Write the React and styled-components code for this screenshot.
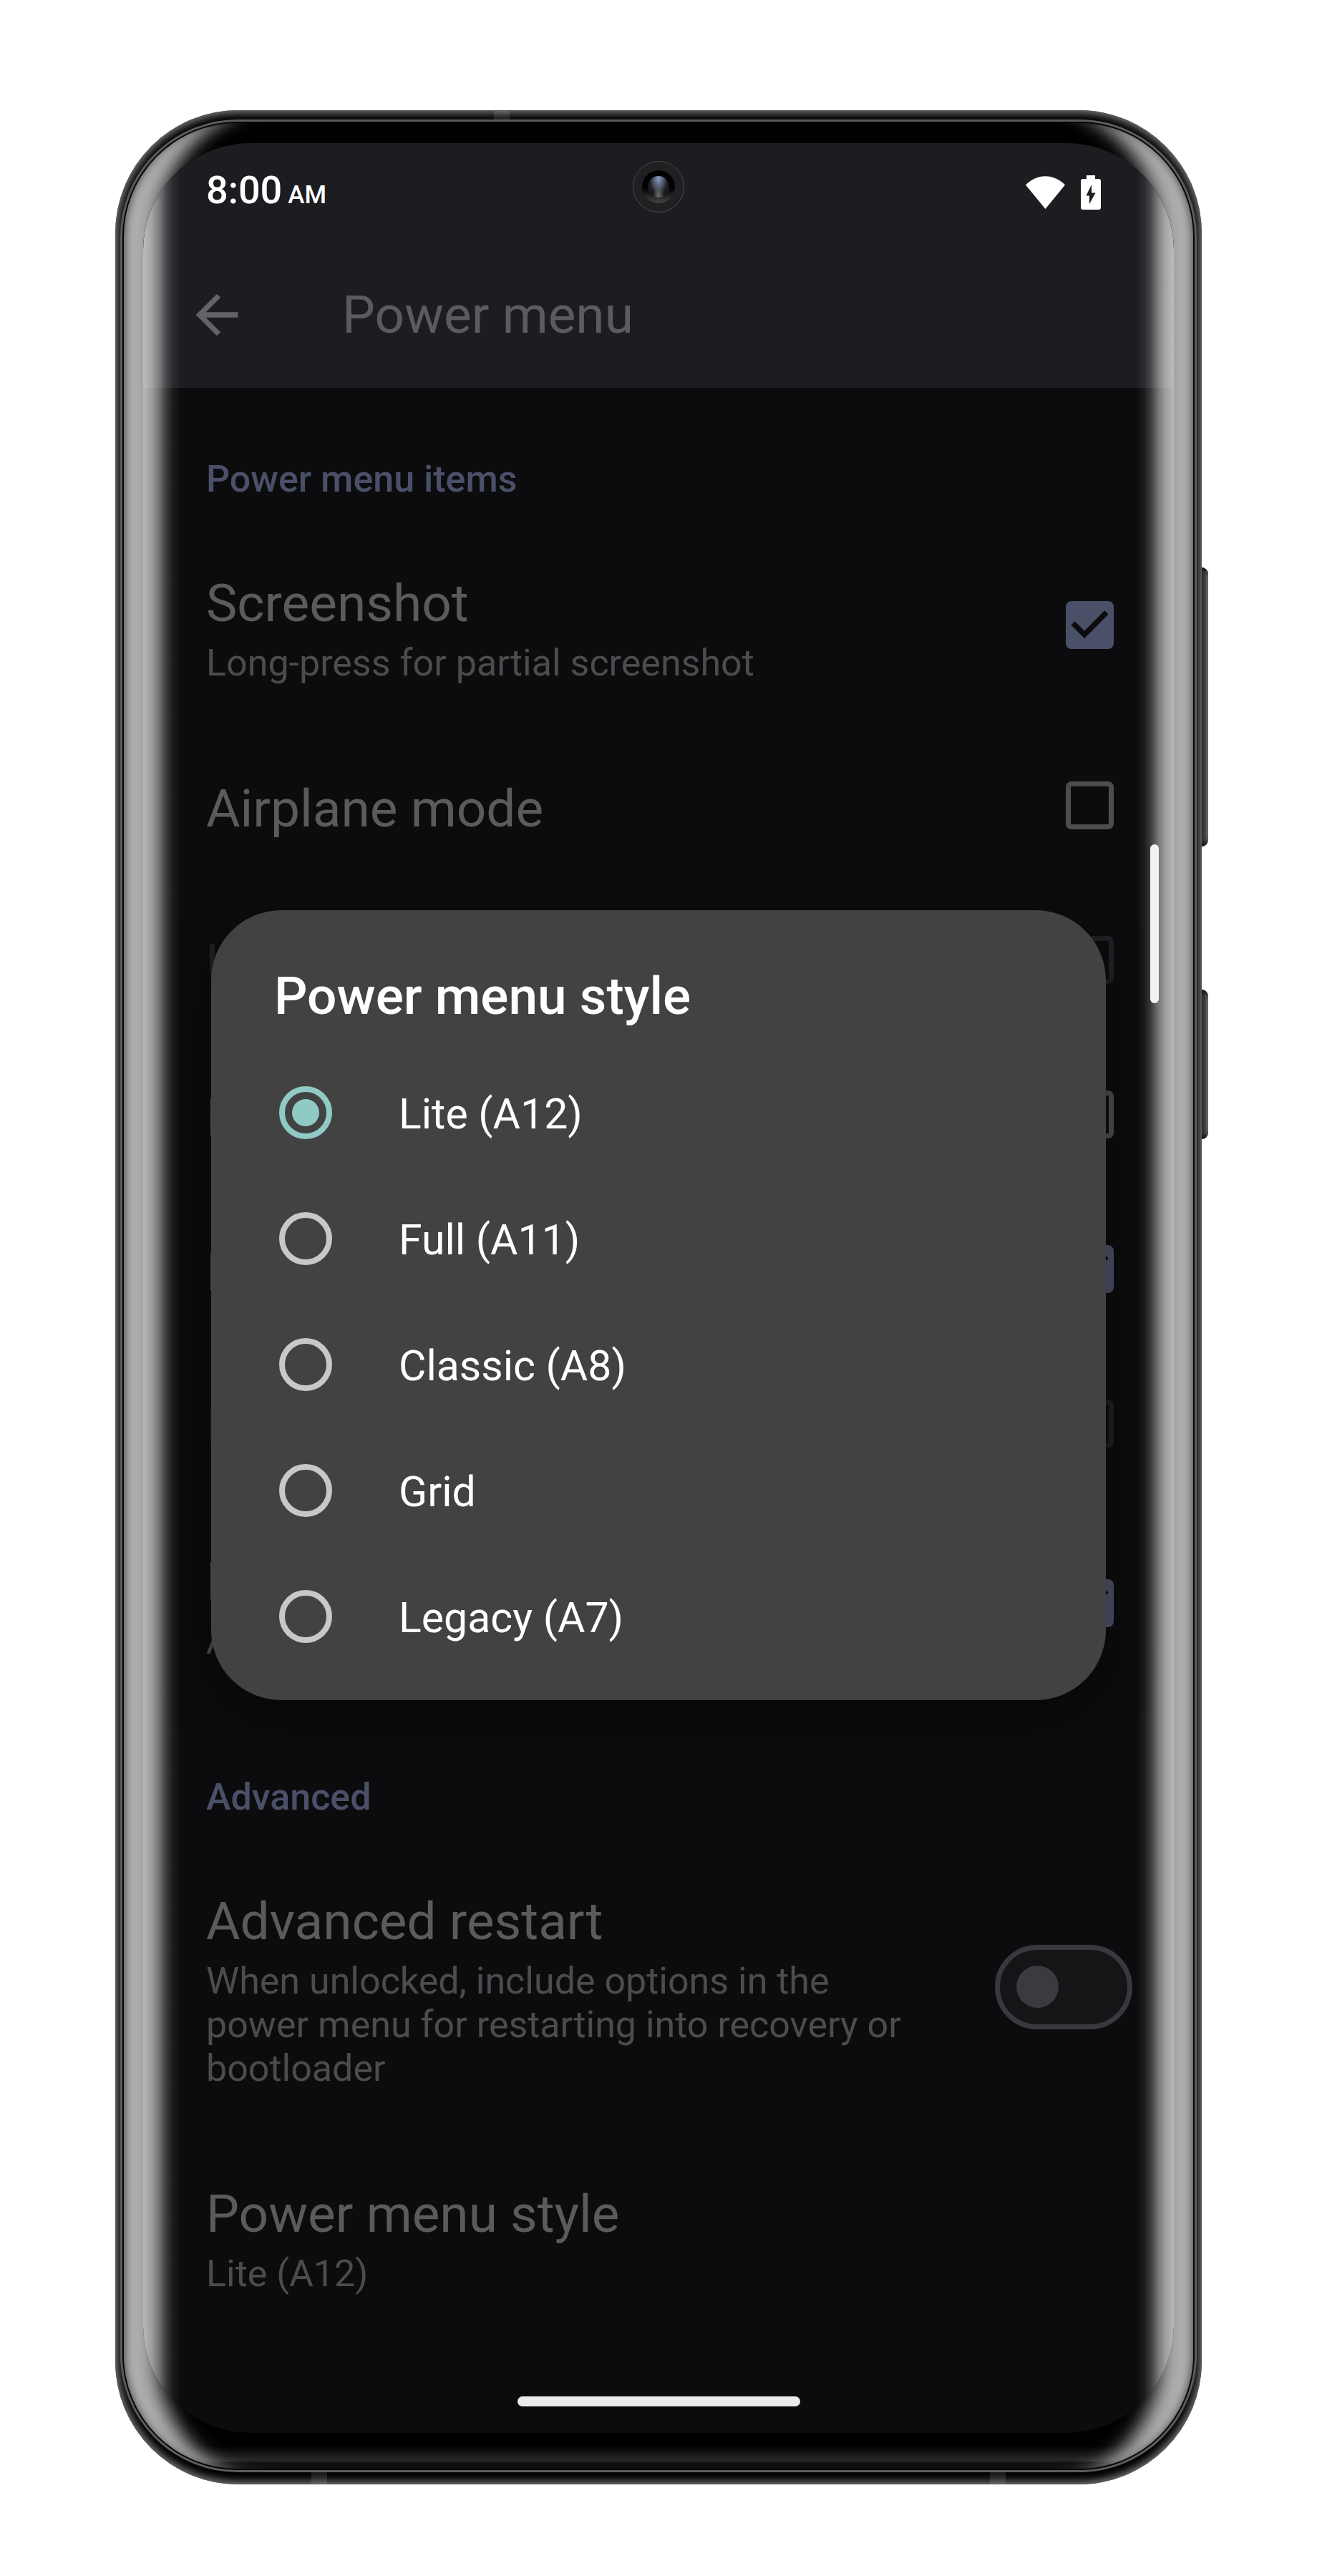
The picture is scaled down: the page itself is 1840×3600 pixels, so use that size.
import React, { useState } from "react";
import styled, { createGlobalStyle, css } from "styled-components";

const GlobalStyle = createGlobalStyle`
  *, *::before, *::after { box-sizing: border-box; }
  body {
    margin: 0;
    background: #ffffff;
    font-family: Roboto, "Noto Sans", sans-serif;
  }
`;

const color = {
  screen: "#0c0c0e",
  bar: "#1c1d20",
  title: "#5b5b5d",
  summary: "#4c4c4f",
  accent: "#4a5068",
  outline: "#4d4d50",
  disabled: "#202124",
  dialog: "#424242",
  radio: "#c8c8c8",
  teal: "#90cac5",
};

const Page = styled.main`
  padding: 154px 24px 128px;
`;

/* ---------- device body ---------- */

const Phone = styled.div`
  position: relative;
  max-width: 1518px;
  margin: 0 auto;
  padding: 13px 7px 17px;
  border-radius: 172px;
  background: #000;
  box-shadow: inset 0 0 12px 4px #7c7c7c;
`;

const Rim = styled.div`
  border: 3px solid #5c5c5c;
  border-radius: 164px;
  background: #050505;
  padding: 2px;
`;

const Glass = styled.div`
  padding: 28px 27px 50px;
  border-radius: 159px;
  background: linear-gradient(
    to top,
    #121212 0 10px,
    #2c2c2c 10px,
    #000 32px
  );
  box-shadow:
    inset 8px 0 12px -6px rgba(0, 0, 0, 0.55),
    inset -8px 0 12px -6px rgba(0, 0, 0, 0.55),
    inset 76px 0 26px -30px #aeaeae,
    inset -76px 0 26px -30px #aeaeae;
`;

const glow = css`
  rgba(255, 255, 255, 0.71) 0,
  rgba(255, 255, 255, 0.6) 12px,
  rgba(255, 255, 255, 0.43) 22px,
  rgba(255, 255, 255, 0.2) 32px,
  rgba(255, 255, 255, 0.07) 41px,
  transparent 52px
`;

const Screen = styled.div`
  position: relative;
  overflow: hidden;
  border-radius: 150px;
  background: ${color.screen};
  &::after {
    content: "";
    position: absolute;
    inset: 0;
    pointer-events: none;
    background:
      linear-gradient(to right, ${glow}),
      linear-gradient(to left, ${glow});
  }
`;

const SideKey = styled.span`
  position: absolute;
  left: 100%;
  top: ${(p) => p.$top}px;
  width: 9px;
  height: ${(p) => p.$height}px;
  border-radius: 0 9px 9px 0;
  background: linear-gradient(to right, #3a3a3a 0 4px, #555 6px, #8c8c8c);
  box-shadow: inset 0 6px 6px -3px #111, inset 0 -6px 6px -3px #111;
`;

const AntennaBand = styled.span`
  position: absolute;
  width: 22px;
  background: rgba(255, 255, 255, 0.1);
  ${(p) =>
    p.$edge === "top"
      ? css`top: 1px; height: 12px;`
      : css`bottom: 1px; height: 16px;`}
  ${(p) => p.$side}: ${(p) => p.$inset}px;
`;

const EdgeHandle = styled.span`
  position: absolute;
  z-index: 2;
  top: 980px;
  right: 21px;
  width: 12px;
  height: 222px;
  border-radius: 6px;
  background: #f3f3f3;
`;

const Camera = styled.span`
  position: absolute;
  top: 25px;
  left: calc(50% - 36px);
  width: 72px;
  height: 72px;
  display: grid;
  place-items: center;
  border: 1px solid #4a4a4a;
  border-radius: 50%;
  background: #202022;
`;

const Lens = styled.span`
  width: 46px;
  height: 46px;
  display: grid;
  place-items: center;
  border-radius: 50%;
  background: linear-gradient(#020204 55%, #454545);
  &::before {
    content: "";
    width: 30px;
    height: 30px;
    border-radius: 50%;
    background:
      radial-gradient(ellipse at 50% 100%, #777 0, transparent 38%),
      radial-gradient(ellipse at 50% 12%, #8c9dbb 0, #59637a 28%, #1b1a1d 62%);
  }
`;

/* ---------- bars ---------- */

const TopArea = styled.header`
  background: ${color.bar};
`;

const StatusBar = styled.div`
  display: flex;
  align-items: center;
  justify-content: space-between;
  height: 138px;
  padding: 0 102px 0 88px;
  color: #fff;
`;

const Clock = styled.time`
  font-size: 54px;
  line-height: 64px;
  font-weight: 500;
`;

const Meridiem = styled.span`
  margin-left: 8px;
  font-size: 35px;
`;

const StatusIcons = styled.div`
  display: flex;
  align-items: center;
  gap: 22px;
`;

const Toolbar = styled.div`
  display: flex;
  align-items: center;
  gap: 131px;
  height: 204px;
  padding: 0 59px;
`;

const BackButton = styled.button`
  display: flex;
  padding: 0;
  border: 0;
  background: none;
  color: #636365;
`;

const ScreenTitle = styled.h1`
  margin: 0;
  font-size: 73px;
  line-height: 86px;
  font-weight: 400;
  color: ${color.title};
`;

const NavBar = styled.div`
  display: flex;
  justify-content: center;
  padding: 81px 0 37px;
`;

const HomePill = styled.button`
  width: 395px;
  height: 14px;
  padding: 0;
  border: 0;
  border-radius: 7px;
  background: #ececec;
`;

/* ---------- preference list ---------- */

const SectionTitle = styled.h2`
  margin: 0;
  padding: 97px 88px 30px;
  font-size: 52px;
  line-height: 61px;
  font-weight: 500;
  color: ${color.accent};
`;

const Preference = styled.label`
  display: flex;
  align-items: center;
  justify-content: space-between;
  gap: 100px;
  padding: 60px ${(p) => (p.$wide ? 58 : 84)}px 60px 88px;
`;

const PreferenceText = styled.span`
  display: flex;
  flex-direction: column;
  gap: 10px;
  padding-top: 10px;
`;

const PreferenceTitle = styled.span`
  font-size: 73px;
  line-height: 86px;
  color: ${(p) => (p.$disabled ? color.disabled : color.title)};
`;

const Summary = styled.span`
  font-size: 52px;
  line-height: 61px;
  color: ${color.summary};
`;

const CheckWrap = styled.span`
  display: grid;
  flex: none;
  width: 67px;
  height: 67px;
  > * { grid-area: 1 / 1; }
  svg { pointer-events: none; }
`;

const CheckInput = styled.input`
  appearance: none;
  width: 67px;
  height: 67px;
  margin: 0;
  border: 7px solid ${color.outline};
  border-radius: 8px;
  &:checked {
    border-color: ${color.accent};
    background: ${color.accent};
  }
  &:disabled { border-color: ${color.disabled}; }
`;

const SwitchInput = styled.input`
  appearance: none;
  flex: none;
  display: flex;
  align-items: center;
  width: 192px;
  height: 118px;
  margin: 0;
  padding: 0 23px;
  border: 7px solid #38393c;
  border-radius: 59px;
  background: #141517;
  &::before {
    content: "";
    width: 59px;
    height: 59px;
    border-radius: 50%;
    background: #3a3b3e;
  }
  &:checked { justify-content: flex-end; }
`;

/* ---------- dialog ---------- */

const DialogLayer = styled.div`
  position: absolute;
  inset: 0;
  display: flex;
  align-items: center;
  padding: 48px 95px 0;
`;

const Dialog = styled.form`
  flex: 1;
  padding-bottom: 29px;
  border-radius: 98px;
  background: ${color.dialog};
  color: #fff;
  box-shadow: 0 24px 70px rgba(0, 0, 0, 0.4);
`;

const DialogTitle = styled.h2`
  margin: 0;
  padding: 77px 88px 32px;
  font-size: 73px;
  line-height: 86px;
  font-weight: 500;
`;

const Option = styled.label`
  display: flex;
  align-items: center;
  gap: 93px;
  height: 176px;
  padding: 0 95px;
  font-size: 59px;
  line-height: 68px;
`;

const OptionText = styled.span`
  padding-top: 4px;
`;

const RadioInput = styled.input`
  appearance: none;
  display: grid;
  place-items: center;
  width: 74px;
  height: 74px;
  margin: 0;
  border: 8px solid ${color.radio};
  border-radius: 50%;
  &:checked { border-color: ${color.teal}; }
  &:checked::before {
    content: "";
    width: 38px;
    height: 38px;
    border-radius: 50%;
    background: ${color.teal};
  }
`;

/* Rows that sit under the open dialog show only the edge of their first letter. */
const items = [
  { title: "Screenshot", summary: "Long-press for partial screenshot", checked: true },
  { title: "Airplane mode" },
  { title: "U", disabled: true },
  { title: "B" },
  { title: "E", checked: true },
  { title: "D", disabled: true },
  { title: "L", summary: "A", checked: true },
];

const styles = ["Lite (A12)", "Full (A11)", "Classic (A8)", "Grid", "Legacy (A7)"];

function CheckRow({ title, summary, disabled, checked: initial = false }) {
  const [checked, setChecked] = useState(initial);
  return (
    <Preference>
      <PreferenceText>
        <PreferenceTitle $disabled={disabled}>{title}</PreferenceTitle>
        {summary && <Summary>{summary}</Summary>}
      </PreferenceText>
      <CheckWrap>
        <CheckInput
          type="checkbox"
          checked={checked}
          disabled={disabled}
          onChange={(e) => setChecked(e.target.checked)}
        />
        {checked && (
          <svg viewBox="3 3 18 18" width="67" height="67" aria-hidden="true">
            <path
              d="M10 17l-5-5 1.41-1.41L10 14.17l7.59-7.59L19 8l-9 9z"
              fill={color.screen}
            />
          </svg>
        )}
      </CheckWrap>
    </Preference>
  );
}

export default function App() {
  const [style, setStyle] = useState(styles[0]);
  const [advanced, setAdvanced] = useState(false);

  return (
    <Page>
      <GlobalStyle />
      <Phone>
        <SideKey $top={639} $height={390} />
        <SideKey $top={1229} $height={209} />
        <AntennaBand $edge="top" $side="left" $inset={529} />
        <AntennaBand $edge="bottom" $side="left" $inset={274} />
        <AntennaBand $edge="bottom" $side="right" $inset={274} />
        <Rim>
          <Glass>
            <Screen>
              <TopArea>
                <StatusBar>
                  <Clock>
                    8:00<Meridiem>AM</Meridiem>
                  </Clock>
                  <StatusIcons>
                    <svg width="55" height="46" viewBox="0 0 55 46" aria-hidden="true">
                      <path d="M0 12.5C16 -4 39 -4 55 12.5L27.5 46Z" fill="#fff" />
                    </svg>
                    <svg width="28" height="48" viewBox="0 0 28 48" aria-hidden="true">
                      <path
                        fillRule="evenodd"
                        fill="#fff"
                        d="M8 0h12v5h5a3 3 0 0 1 3 3v37a3 3 0 0 1-3 3H3a3 3 0 0 1-3-3V8a3 3 0 0 1 3-3h5zM15 13L7.500 28.500h4.500V40l8.500-15.500H15z"
                      />
                    </svg>
                  </StatusIcons>
                </StatusBar>
                <Toolbar>
                  <BackButton type="button" aria-label="Back">
                    <svg width="88" height="88" viewBox="0 0 24 24" aria-hidden="true">
                      <path
                        d="M20 11H7.830l5.590-5.590L12 4l-8 8 8 8 1.410-1.410L7.830 13H20v-2z"
                        fill="currentColor"
                      />
                    </svg>
                  </BackButton>
                  <ScreenTitle>Power menu</ScreenTitle>
                </Toolbar>
              </TopArea>

              <section>
                <SectionTitle>Power menu items</SectionTitle>
                {items.map((item) => (
                  <CheckRow key={item.title} {...item} />
                ))}
              </section>

              <section>
                <SectionTitle>Advanced</SectionTitle>
                <Preference $wide>
                  <PreferenceText>
                    <PreferenceTitle>Advanced restart</PreferenceTitle>
                    <Summary>
                      When unlocked, include options in the power menu for
                      restarting into recovery or bootloader
                    </Summary>
                  </PreferenceText>
                  <SwitchInput
                    type="checkbox"
                    role="switch"
                    checked={advanced}
                    onChange={(e) => setAdvanced(e.target.checked)}
                  />
                </Preference>
                <Preference as="div">
                  <PreferenceText>
                    <PreferenceTitle>Power menu style</PreferenceTitle>
                    <Summary>{style}</Summary>
                  </PreferenceText>
                </Preference>
              </section>

              <NavBar>
                <HomePill type="button" aria-label="Home" />
              </NavBar>

              <Camera>
                <Lens />
              </Camera>

              <DialogLayer>
                <Dialog role="dialog" aria-labelledby="style-title">
                  <DialogTitle id="style-title">Power menu style</DialogTitle>
                  {styles.map((name) => (
                    <Option key={name}>
                      <RadioInput
                        type="radio"
                        name="power-style"
                        checked={style === name}
                        onChange={() => setStyle(name)}
                      />
                      <OptionText>{name}</OptionText>
                    </Option>
                  ))}
                </Dialog>
              </DialogLayer>
              <EdgeHandle />
            </Screen>
          </Glass>
        </Rim>
      </Phone>
    </Page>
  );
}
